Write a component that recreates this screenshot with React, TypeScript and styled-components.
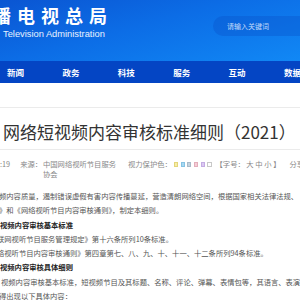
import React from "react";
import styled, { createGlobalStyle } from "styled-components";

const GlobalStyle = createGlobalStyle`
  html, body {
    margin: 0;
    padding: 0;
    background: #fff;
    overflow: hidden;
  }
  body {
    font-family: "Noto Sans CJK SC", "Liberation Sans", sans-serif;
  }
`;

const navItems = ["新闻", "政务", "科技", "服务", "互动", "数据"];

const swatches = [
    { color: "#f6eda6", border: "#e3d57a" },
    { color: "#a9d9f2", border: "#86c3e3" },
    { color: "#c5d3de", border: "#a9bac8" },
    { color: "#f6ccd6", border: "#e2aebb" },
    { color: "#dcc9f2", border: "#c4ace3" },
    { color: "#ffffff", border: "#c8c8c8" }
];

const lines = [
    { text: "频内容质量，遏制错误虚假有害内容传播蔓延，营造清朗网络空间，根据国家相关法律法规、", shift: -1, bold: false },
    { text: "》和《网络视听节目内容审核通则》，制定本细则。", shift: -1, bold: false },
    { text: "视频内容审核基本标准", shift: 0, bold: true },
    { text: "联网视听节目服务管理规定》第十六条所列10条标准。", shift: -3, bold: false },
    { text: "络视听节目内容审核通则》第四章第七、八、九、十、十一、十二条所列94条标准。", shift: -3, bold: false },
    { text: "视频内容审核具体细则", shift: 0, bold: true },
    { text: "视频内容审核基本标准，短视频节目及其标题、名称、评论、弹幕、表情包等，其语言、表演、字幕、画面", shift: 1, bold: false },
    { text: "得出现以下具体内容：", shift: -1, bold: false }
];

export default function App() {
    return (
        <Page>
            <GlobalStyle />
            <Header>
                <Brand>
                    <BrandName>广播电视总局</BrandName>
                    <BrandEnglish>Television Administration</BrandEnglish>
                </Brand>
                <Search>请输入关键词</Search>
            </Header>
            <Nav>
                {navItems.map((item) => (
                    <NavItem key={item}>{item}</NavItem>
                ))}
            </Nav>
            <Article>
                <Rule />
                <Title>网络短视频内容审核标准细则（2021）</Title>
                <Rule />
                <Meta>
                    <MetaText>:19</MetaText>
                    <MetaText>来源：</MetaText>
                    <Source>中国网络视听节目服务协会</Source>
                    <MetaText $gap={10}>视力保护色：</MetaText>
                    <Swatches>
                        {swatches.map((s, i) => (
                            <Swatch key={i} $color={s.color} $border={s.border} />
                        ))}
                    </Swatches>
                    <MetaText $gap={4}>【字号：&nbsp;大&nbsp;中&nbsp;小&nbsp;】</MetaText>
                    <MetaText $gap={9}>分享到：</MetaText>
                </Meta>
                <Body>
                    {lines.map((line, i) => (
                        <Line key={i} $shift={line.shift} $bold={line.bold}>
                            {line.text}
                        </Line>
                    ))}
                </Body>
            </Article>
        </Page>
    );
}

const Page = styled.div`
    width: 300px;
    height: 300px;
    overflow: hidden;
`;

const Header = styled.header`
    height: 61px;
    display: flex;
    justify-content: space-between;
    background: linear-gradient(165deg, #0a55d2 0%, #0c6de6 45%, #1188f5 100%);
    overflow: hidden;
`;

const Brand = styled.div`
    display: flex;
    flex-direction: column;
    padding-top: 3px;
    margin-left: -31px;
`;

const BrandName = styled.div`
    font-size: 18px;
    line-height: 24px;
    font-weight: 700;
    letter-spacing: 6px;
    color: #fff;
    white-space: nowrap;
`;

const BrandEnglish = styled.div`
    margin: 1px 0 0 34px;
    font-family: "Liberation Sans", Arial, sans-serif;
    font-size: 9.3px;
    line-height: 12px;
    color: #e8f2ff;
    white-space: nowrap;
`;

const Search = styled.div`
    flex: none;
    width: 107px;
    height: 20px;
    margin: 16px -20px 0 0;
    padding-left: 14px;
    box-sizing: border-box;
    border-radius: 10px;
    background: rgba(10, 80, 200, 0.35);
    color: rgba(225, 238, 255, 0.85);
    font-size: 7px;
    line-height: 20px;
    white-space: nowrap;
`;

const Nav = styled.nav`
    height: 22px;
    display: flex;
    padding-left: 7px;
    background: #0445c4;
    overflow: hidden;
`;

const NavItem = styled.div`
    flex: none;
    width: 55.4px;
    font-size: 8.5px;
    line-height: 22px;
    font-weight: 700;
    color: #fff;
    white-space: nowrap;
`;

const Article = styled.main`
    padding-top: 24px;
`;

const Rule = styled.div`
    height: 1px;
    background: #ebebeb;
`;

const Title = styled.h1`
    margin: 12px 0 5px;
    padding-left: 3px;
    font-size: 17px;
    line-height: 24px;
    font-weight: 400;
    color: #333;
    white-space: nowrap;
`;

const Meta = styled.div`
    display: flex;
    align-items: flex-start;
    padding-top: 9px;
    font-size: 7.3px;
    line-height: 10px;
    color: #888;
`;

const MetaText = styled.span<{ $gap?: number }>`
    flex: none;
    margin-left: ${(p) => p.$gap ?? 10}px;
    white-space: nowrap;

    &:first-child {
        margin-left: 0;
    }
`;

const Source = styled.span`
    flex: none;
    width: 75px;
    margin-left: 1px;
`;

const Swatches = styled.span`
    display: flex;
    gap: 2.4px;
    margin: 2.5px 0 0 2px;
`;

const Swatch = styled.span<{ $color: string; $border: string }>`
    width: 4.3px;
    height: 5px;
    box-sizing: border-box;
    background: ${(p) => p.$color};
    border: 0.6px solid ${(p) => p.$border};
`;

const Body = styled.div`
    margin-top: 10px;
`;

const Line = styled.p<{ $shift: number; $bold: boolean }>`
    margin: 0 0 0 ${(p) => p.$shift}px;
    font-size: 7.3px;
    line-height: 14.3px;
    font-weight: ${(p) => (p.$bold ? 700 : 400)};
    color: ${(p) => (p.$bold ? "#222" : "#555")};
    white-space: nowrap;
`;
